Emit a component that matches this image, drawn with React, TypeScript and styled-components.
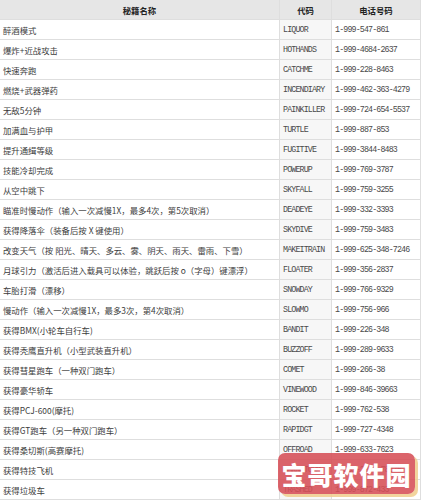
import React from "react";
import styled, { createGlobalStyle } from "styled-components";

const Global = createGlobalStyle`
  html, body { margin: 0; padding: 0; background: #fff; }
  #root { width: 422px; }
`;

const Page = styled.div`
  position: relative;
  width: 422px;
  height: 500px;
  overflow: hidden;
  background: #fff;
  font-family: "Noto Sans CJK SC", "Noto Sans", sans-serif;
`;

const Row = styled.div<{ $head?: boolean }>`
  display: grid;
  grid-template-columns: 280px 52px 88px;
  height: 20px;
  box-sizing: border-box;
  border-bottom: 1px solid #dedede;
  border-right: 1px solid #dedede;
  width: 421px;
  background: ${(p) => (p.$head ? "#e6e6e6" : "#fff")};
`;

const Cell = styled.div<{ $head?: boolean; $code?: boolean; $mono?: boolean; $last?: boolean }>`
  box-sizing: border-box;
  display: flex;
  align-items: center;
  justify-content: ${(p) => (p.$head ? "center" : "flex-start")};
  padding-left: ${(p) => (p.$head ? 0 : 3)}px;
  border-right: ${(p) => (p.$last ? "none" : "1px solid #dedede")};
  background: ${(p) => (p.$code && !p.$head ? "#f7f7f7" : "transparent")};
  white-space: nowrap;
  overflow: hidden;
  color: ${(p) => (p.$head ? "#222" : p.$mono ? "#4a4a4a" : "#3c3c3c")};
  font-weight: ${(p) => (p.$head ? 700 : 400)};
  font-size: ${(p) => (p.$mono ? 8.3 : 8.4)}px;
  font-family: ${(p) =>
    p.$mono
      ? `"Liberation Mono", "Noto Sans CJK SC", monospace`
      : `"Noto Sans CJK SC", "Noto Sans", sans-serif`};
  letter-spacing: ${(p) => (p.$mono ? "-0.85px" : "0")};
`;

const Watermark = styled.div`
  position: absolute;
  left: 278px;
  top: 453px;
  width: 137px;
  height: 41px;
  border-radius: 7px;
  background: rgba(214, 78, 86, 0.88);
  box-shadow: 3px 3px 0 rgba(240, 205, 140, 0.85);
  display: flex;
  align-items: center;
  justify-content: center;
  color: #fff;
  font-family: "Noto Sans CJK SC", sans-serif;
  font-weight: 900;
  font-size: 25px;
  letter-spacing: 1px;
`;

const rows: [string, string, string][] = [
  ["醉酒模式", "LIQUOR", "1-999-547-861"],
  ["爆炸+近战攻击", "HOTHANDS", "1-999-4684-2637"],
  ["快速奔跑", "CATCHME", "1-999-228-8463"],
  ["燃烧+武器弹药", "INCENDIARY", "1-999-462-363-4279"],
  ["无敌5分钟", "PAINKILLER", "1-999-724-654-5537"],
  ["加满血与护甲", "TURTLE", "1-999-887-853"],
  ["提升通缉等级", "FUGITIVE", "1-999-3844-8483"],
  ["技能冷却完成", "POWERUP", "1-999-769-3787"],
  ["从空中跳下", "SKYFALL", "1-999-759-3255"],
  ["瞄准时慢动作（输入一次减慢1X，最多4次，第5次取消）", "DEADEYE", "1-999-332-3393"],
  ["获得降落伞（装备后按 X 键使用）", "SKYDIVE", "1-999-759-3483"],
  ["改变天气（按 阳光、晴天、多云、雾、阴天、雨天、雷雨、下雪）", "MAKEITRAIN", "1-999-625-348-7246"],
  ["月球引力（激活后进入载具可以体验，跳跃后按 o（字母）键漂浮）", "FLOATER", "1-999-356-2837"],
  ["车胎打滑（漂移）", "SNOWDAY", "1-999-766-9329"],
  ["慢动作（输入一次减慢1X，最多3次，第4次取消）", "SLOWMO", "1-999-756-966"],
  ["获得BMX(小轮车自行车)", "BANDIT", "1-999-226-348"],
  ["获得秃鹰直升机（小型武装直升机）", "BUZZOFF", "1-999-289-9633"],
  ["获得彗星跑车（一种双门跑车）", "COMET", "1-999-266-38"],
  ["获得豪华轿车", "VINEWOOD", "1-999-846-39663"],
  ["获得PCJ-600(摩托)", "ROCKET", "1-999-762-538"],
  ["获得GT跑车（另一种双门跑车）", "RAPIDGT", "1-999-727-4348"],
  ["获得桑切斯(高赛摩托)", "OFFROAD", "1-999-633-7623"],
  ["获得特技飞机", "BARNSTORM", "1-999-2276-78676"],
  ["获得垃圾车", "TRASHED", "1-999-872-433"],
];

export default function App() {
  return (
    <Page>
      <Global />
      <Row $head>
        <Cell $head>秘籍名称</Cell>
        <Cell $head $code>代码</Cell>
        <Cell $head $last>电话号码</Cell>
      </Row>
      {rows.map(([name, code, phone]) => (
        <Row key={code}>
          <Cell>{name}</Cell>
          <Cell $code $mono>{code}</Cell>
          <Cell $mono $last>{phone}</Cell>
        </Row>
      ))}
      <Watermark>宝哥软件园</Watermark>
    </Page>
  );
}
